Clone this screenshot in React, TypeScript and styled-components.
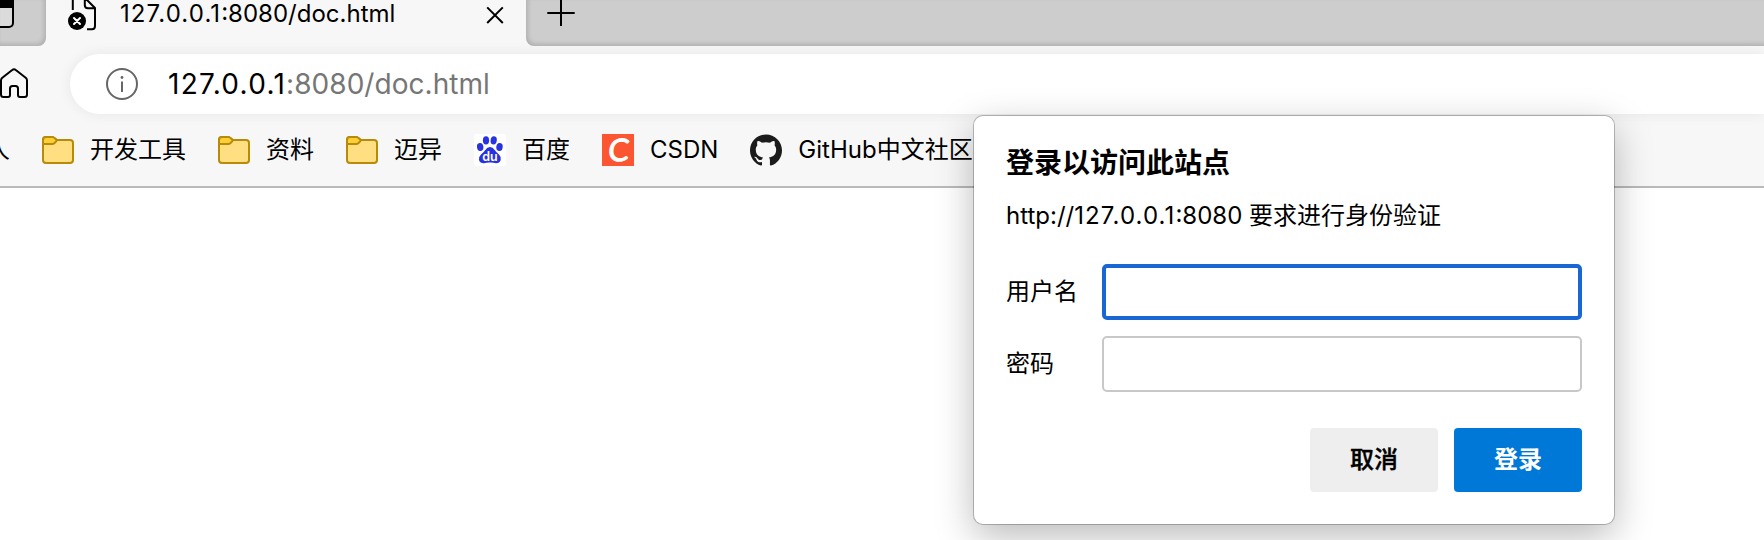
import React from 'react';
import styled, { createGlobalStyle } from 'styled-components';
import { SiGithub } from 'react-icons/si';

const GlobalStyle = createGlobalStyle`
  * { box-sizing: border-box; }
  html, body { margin: 0; padding: 0; background: #fff; overflow: hidden; }
  body { font-family: Inter, 'Noto Sans CJK SC', sans-serif; color: #000; }
`;

const Window = styled.div`
  position: relative;
  width: 1764px;
  height: 540px;
  overflow: hidden;
  background: #fff;
`;

const Chrome = styled.header`
  height: 188px;
  background: #f7f7f7;
  border-bottom: 2px solid #b9b9b9;
  display: flex;
  flex-direction: column;
`;

const TabStrip = styled.div`
  display: flex;
  height: 46px;
`;

const StripEnd = styled.div<{ $side: 'left' | 'right' }>`
  background: #cdcdcd;
  overflow: hidden;
  ${(p) =>
    p.$side === 'left'
      ? 'width: 46px; border-bottom-right-radius: 8px; box-shadow: inset -2px -2px 4px rgba(0,0,0,.14);'
      : 'flex: 1; margin-right: -8px; border-bottom-left-radius: 8px; box-shadow: inset 2px -2px 4px rgba(0,0,0,.14);'}
`;

const Tab = styled.div`
  width: 480px;
  height: 46px;
  display: flex;
`;

const TabTitle = styled.div`
  width: 386px;
  padding-left: 20px;
  line-height: 28px;
  font-size: 24px;
  white-space: nowrap;
`;

const AddressRow = styled.div`
  height: 68px;
  padding-top: 8px;
  display: flex;
`;

const HomeSlot = styled.div`
  width: 70px;
  height: 60px;
`;

const AddressBar = styled.div`
  flex: 1;
  height: 60px;
  padding-left: 36px;
  background: #fff;
  border-radius: 30px 0 0 30px;
  box-shadow: 0 0 14px rgba(0, 0, 0, 0.07);
  display: flex;
  align-items: center;
  gap: 30px;
`;

const Url = styled.div`
  font-size: 28px;
  line-height: 60px;
  letter-spacing: 0.05px;
  color: #767676;
  white-space: nowrap;
`;

const Host = styled.span`
  color: #000;
  letter-spacing: 0.046em;
`;

const Bookmarks = styled.nav`
  height: 72px;
  margin-left: -14px;
  display: flex;
  align-items: center;
  gap: 32px;
`;

const Bookmark = styled.div`
  display: flex;
  align-items: center;
  gap: 16px;
  height: 32px;
  font-size: 24px;
  line-height: 32px;
  white-space: nowrap;
  svg { flex: none; overflow: visible; }
`;

const Dialog = styled.form`
  position: absolute;
  left: 974px;
  top: 116px;
  width: 640px;
  height: 408px;
  padding: 27px 32px 32px;
  background: #fff;
  border-radius: 9px;
  box-shadow: 0 0 0 1px rgba(0, 0, 0, 0.23), 0 12px 38px rgba(0, 0, 0, 0.28);
  display: flex;
  flex-direction: column;
`;

const Title = styled.h1`
  margin: 0;
  font-size: 28px;
  line-height: 40px;
  font-weight: 700;
`;

const Message = styled.p`
  margin: 15px 0 30px;
  font-size: 24px;
  line-height: 36px;
  white-space: nowrap;
`;

const Field = styled.label`
  display: flex;
  align-items: center;
  height: 56px;
  margin-bottom: 16px;
  font-size: 24px;
`;

const FieldName = styled.span`
  width: 96px;
  line-height: 32px;
`;

const Input = styled.input<{ $active?: boolean }>`
  flex: 1;
  height: 56px;
  padding: 0 14px;
  background: #fff;
  border: ${(p) => (p.$active ? '4px solid #1967d2' : '2px solid #c8c8c8')};
  border-radius: 5px;
  outline: none;
  font: inherit;
`;

const Actions = styled.div`
  display: flex;
  justify-content: flex-end;
  gap: 16px;
  margin-top: 20px;
`;

const Button = styled.button<{ $primary?: boolean }>`
  width: 128px;
  height: 64px;
  padding: 0;
  border: 0;
  border-radius: 4px;
  background: ${(p) => (p.$primary ? '#0078d7' : '#eeeeee')};
  color: ${(p) => (p.$primary ? '#fff' : '#000')};
  font-family: inherit;
  font-size: 24px;
  font-weight: ${(p) => (p.$primary ? 700 : 500)};
  -webkit-text-stroke: ${(p) => (p.$primary ? '0' : '0.4px #000')};
  line-height: 62px;
`;

const CloseSlot = styled.div`
  width: 40px;
`;

const TabActionsIcon = () => (
  <svg width="46" height="46" viewBox="0 0 46 46">
    <rect x="-10" y="-3" width="23" height="30" rx="4" fill="#f7f7f7" fillOpacity="0.35" stroke="#000" strokeWidth="2" />
    <path d="M-10 -4H10Q14 -4 14 1V8H-10Z" />
  </svg>
);

const BrokenPageIcon = () => (
  <svg width="54" height="46" viewBox="46 0 54 46">
    <path
      d="M72.8 10V0Q72.8 -3 76 -3H84L95 8V26Q95 29.2 92 29.2H87M84.8 -3V5Q84.8 8.2 88 8.2H95"
      fill="none"
      stroke="#000"
      strokeWidth="2"
      strokeLinejoin="round"
    />
    <circle cx="77" cy="21" r="9" />
    <path d="M74 18L80 24M80 18L74 24" stroke="#fff" strokeWidth="2" strokeLinecap="round" />
  </svg>
);

const CloseIcon = () => (
  <svg width="40" height="46" viewBox="0 0 40 46">
    <path d="M1.2 7.4L16.8 23M16.8 7.4L1.2 23" stroke="#000" strokeWidth="2" />
  </svg>
);

const PlusIcon = () => (
  <svg width="60" height="46" viewBox="526 0 60 46">
    <path d="M547.3 13H574.7M561 -1V26" stroke="#000" strokeWidth="2" />
  </svg>
);

const HomeIcon = () => (
  <svg width="70" height="60" viewBox="0 54 70 60">
    <path
      d="M1 80.5Q1 79 2 78L12.2 70Q14 68.5 15.8 70L26 78Q27 79 27 80.5V94.5Q27 97 24.5 97H20Q18 97 18 95V88.5Q18 86 15.5 86H12.5Q10 86 10 88.5V95Q10 97 8 97H3.5Q1 97 1 94.5Z"
      fill="none"
      stroke="#000"
      strokeWidth="2"
      strokeLinejoin="round"
    />
  </svg>
);

const InfoIcon = () => (
  <svg width="32" height="32" viewBox="0 0 32 32">
    <circle cx="16" cy="16" r="15" fill="none" stroke="#666" strokeWidth="2" />
    <circle cx="16" cy="9.5" r="1.4" fill="#666" />
    <path d="M16 13.5V24" stroke="#666" strokeWidth="2" />
  </svg>
);

const FolderIcon = () => (
  <svg width="32" height="32" viewBox="0 0 32 32">
    <path
      d="M1 6Q1 3 4 3H10.5L15 6H28Q31 6 31 9V26Q31 29 28 29H4Q1 29 1 26Z"
      fill="#ffdf82"
      stroke="#b78a07"
      strokeWidth="2"
      strokeLinejoin="round"
    />
    <path
      d="M1 10V6Q1 3 4 3H10.5Q12 3 15 6.3L12.3 9.3Q11.4 10 10.5 10Z"
      fill="#fccf39"
      stroke="#b78a07"
      strokeWidth="2"
      strokeLinejoin="round"
    />
  </svg>
);

const BaiduIcon = () => (
  <svg width="32" height="32" viewBox="0 0 32 32">
    <rect width="32" height="32" rx="3" fill="#fff" />
    <g fill="#2932e1">
      <ellipse cx="6.2" cy="13" rx="3.2" ry="4" transform="rotate(-8 6.2 13)" />
      <ellipse cx="12" cy="6.4" rx="3.1" ry="4.1" />
      <ellipse cx="19.7" cy="6.4" rx="3.1" ry="4.1" transform="rotate(8 19.7 6.4)" />
      <ellipse cx="25.5" cy="13" rx="3.2" ry="4" transform="rotate(8 25.5 13)" />
      <path d="M16 13Q18.8 13 20.7 16Q22 18 25 20.5Q27.5 23 26.7 26Q25.5 29.3 22 29.2Q19 28.5 16 28.6Q13 28.5 10 29.2Q6 29.3 5 26Q4.3 23 7 20.5Q10 18 11.3 16Q13.2 13 16 13Z" />
    </g>
    <text x="16" y="27" textAnchor="middle" fill="#fff" fontFamily="Inter" fontWeight="600" fontSize="12.5">
      du
    </text>
  </svg>
);

const CsdnIcon = () => (
  <svg width="32" height="32" viewBox="0 0 32 32">
    <rect width="32" height="32" fill="#fc5531" />
    <text
      x="16"
      y="27"
      textAnchor="middle"
      fill="#fff"
      stroke="#fff"
      strokeWidth="1"
      strokeLinejoin="round"
      fontFamily="Lato"
      fontSize="31"
      transform="translate(2.5 0) skewX(-6)"
    >
      C
    </text>
  </svg>
);

export default function App() {
  return (
    <Window>
      <GlobalStyle />
      <Chrome>
        <TabStrip>
          <StripEnd $side="left">
            <TabActionsIcon />
          </StripEnd>
          <Tab>
            <BrokenPageIcon />
            <TabTitle>
              <Host>127.0.0.1</Host>:8080/doc.html
            </TabTitle>
            <CloseSlot>
              <CloseIcon />
            </CloseSlot>
          </Tab>
          <StripEnd $side="right">
            <PlusIcon />
          </StripEnd>
        </TabStrip>
        <AddressRow>
          <HomeSlot>
            <HomeIcon />
          </HomeSlot>
          <AddressBar>
            <InfoIcon />
            <Url>
              <Host>127.0.0.1</Host>:8080/doc.html
            </Url>
          </AddressBar>
        </AddressRow>
        <Bookmarks>
          <Bookmark>人</Bookmark>
          <Bookmark><FolderIcon />开发工具</Bookmark>
          <Bookmark><FolderIcon />资料</Bookmark>
          <Bookmark><FolderIcon />迈异</Bookmark>
          <Bookmark><BaiduIcon />百度</Bookmark>
          <Bookmark><CsdnIcon />CSDN</Bookmark>
          <Bookmark><SiGithub size={32} color="#1b1b1b" />GitHub中文社区</Bookmark>
        </Bookmarks>
      </Chrome>
      <Dialog>
        <Title>登录以访问此站点</Title>
        <Message>
          http://<Host>127.0.0.1</Host>:8080 要求进行身份验证
        </Message>
        <Field>
          <FieldName>用户名</FieldName>
          <Input $active type="text" />
        </Field>
        <Field>
          <FieldName>密码</FieldName>
          <Input type="password" />
        </Field>
        <Actions>
          <Button type="button">取消</Button>
          <Button type="button" $primary>登录</Button>
        </Actions>
      </Dialog>
    </Window>
  );
}
